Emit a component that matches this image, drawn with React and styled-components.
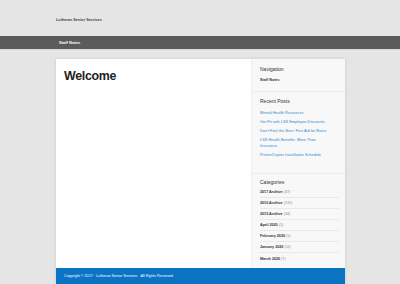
import React from 'react';
import styled, { createGlobalStyle } from 'styled-components';

const GlobalStyle = createGlobalStyle`
  html, body {
    margin: 0;
    padding: 0;
    background: #e5e5e5;
    font-family: "Liberation Sans", Arial, sans-serif;
    color: #333;
  }
`;

const SiteHeader = styled.header`
  height: 36px;
  padding: 4px 0 0 56px;
  box-sizing: border-box;
  display: flex;
  align-items: center;
`;

const SiteTitle = styled.div`
  font-size: 3.8px;
  font-weight: bold;
  color: #444;
`;

const NavBar = styled.nav`
  height: 13px;
  background: #5b5b5b;
  display: flex;
  align-items: center;
  padding-left: 59px;
  border-bottom: 1px solid #d6d6d6;
`;

const NavLink = styled.span`
  font-size: 4px;
  font-weight: bold;
  color: #fff;
`;

const Card = styled.div`
  margin: 9px 0 0 56px;
  width: 289px;
  background: #fff;
  box-shadow: 0 0 3px rgba(0, 0, 0, 0.12);
`;

const Columns = styled.div`
  display: grid;
  grid-template-columns: 195px 94px;
`;

const Main = styled.main`
  padding: 10px 8px;
`;

const Title = styled.h1`
  margin: 0;
  font-size: 12.4px;
  line-height: 14px;
  font-weight: bold;
  letter-spacing: -0.3px;
  color: #222;
`;

const Sidebar = styled.aside`
  background: #f8f8f8;
  border-left: 1px solid #efefef;
`;

const Section = styled.section`
  padding: ${({ $top }) => $top}px 6px ${({ $bottom }) => $bottom}px 8px;
  border-bottom: ${({ $last }) => ($last ? 'none' : '1px solid #ececec')};
`;

const Heading = styled.h4`
  margin: 0;
  font-size: 5px;
  line-height: 8px;
  font-weight: normal;
  color: #333;
`;

const BoldItem = styled.div`
  margin-top: 3px;
  font-size: 3.7px;
  line-height: 8px;
  font-weight: bold;
  color: #333;
`;

const PostList = styled.ul`
  list-style: none;
  margin: 5px 0 0;
  padding: 0;
`;

const Post = styled.li`
  font-size: 3.9px;
  line-height: 6px;
  margin-bottom: 3px;
  color: #2b8bd3;
  white-space: nowrap;
`;

const CatList = styled.ul`
  list-style: none;
  margin: 1px 0 0;
  padding: 0;
`;

const Cat = styled.li`
  height: 11px;
  display: flex;
  align-items: center;
  font-size: 3.7px;
  font-weight: bold;
  color: #333;
  border-bottom: ${({ $last }) => ($last ? 'none' : '1px solid #e9e9e9')};
  box-sizing: border-box;

  span {
    font-weight: normal;
    color: #888;
  }
`;

const Footer = styled.footer`
  background: #0b73c4;
  height: 22px;
  padding: 5px 8px;
  box-sizing: border-box;
  font-size: 3.7px;
  line-height: 6px;
  color: #fff;
`;

const posts = [
  ['Mental Health Resources'],
  ['Get Fit with LSS Employee Discounts'],
  ["Don't Feel the Burn: First Aid for Burns"],
  ['LSS Health Benefits: More Than', 'Insurance'],
  ['Printer/Copier Installation Schedule'],
];

const categories = [
  ['2017 Archive', 47],
  ['2016 Archive', 131],
  ['2015 Archive', 34],
  ['April 2020', 1],
  ['February 2020', 5],
  ['January 2020', 11],
  ['March 2020', 7],
];

export default function App() {
  return (
    <>
      <GlobalStyle />
      <SiteHeader>
        <SiteTitle>Lutheran Senior Services</SiteTitle>
      </SiteHeader>
      <NavBar>
        <NavLink>Staff Notes</NavLink>
      </NavBar>
      <Card>
        <Columns>
          <Main>
            <Title>Welcome</Title>
          </Main>
          <Sidebar>
            <Section $top={6} $bottom={7}>
              <Heading>Navigation</Heading>
              <BoldItem>Staff Notes</BoldItem>
            </Section>
            <Section $top={5} $bottom={12}>
              <Heading>Recent Posts</Heading>
              <PostList>
                {posts.map((lines) => (
                  <Post key={lines[0]}>
                    {lines.map((l, i) => (
                      <React.Fragment key={l}>
                        {i > 0 && <br />}
                        {l}
                      </React.Fragment>
                    ))}
                  </Post>
                ))}
              </PostList>
            </Section>
            <Section $top={4} $bottom={4} $last>
              <Heading>Categories</Heading>
              <CatList>
                {categories.map(([name, count], i) => (
                  <Cat key={name} $last={i === categories.length - 1}>
                    {name}
                    <span>&nbsp;({count})</span>
                  </Cat>
                ))}
              </CatList>
            </Section>
          </Sidebar>
        </Columns>
        <Footer>Copyright © 2017 · Lutheran Senior Services · All Rights Reserved</Footer>
      </Card>
    </>
  );
}
